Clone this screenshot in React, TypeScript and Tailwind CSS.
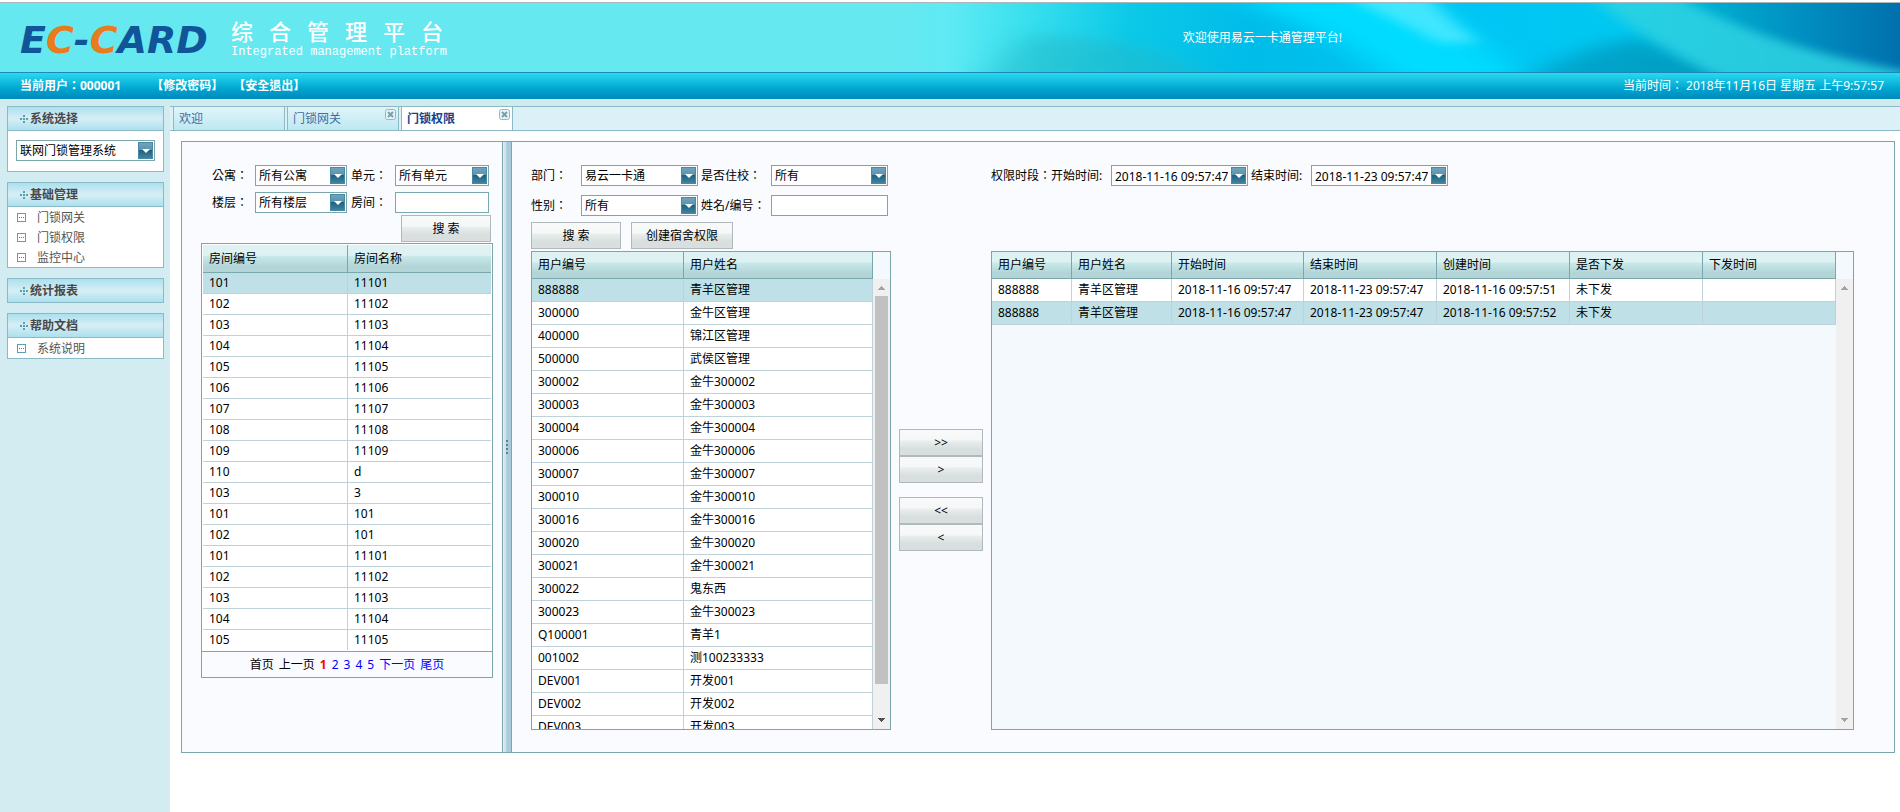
import { useState } from "react";
import type { ReactNode } from "react";
import clsx from "clsx";

const rooms = [
  ["101", "11101"],
  ["102", "11102"],
  ["103", "11103"],
  ["104", "11104"],
  ["105", "11105"],
  ["106", "11106"],
  ["107", "11107"],
  ["108", "11108"],
  ["109", "11109"],
  ["110", "d"],
  ["103", "3"],
  ["101", "101"],
  ["102", "101"],
  ["101", "11101"],
  ["102", "11102"],
  ["103", "11103"],
  ["104", "11104"],
  ["105", "11105"],
];

const users = [
  ["888888", "青羊区管理"],
  ["300000", "金牛区管理"],
  ["400000", "锦江区管理"],
  ["500000", "武侯区管理"],
  ["300002", "金牛300002"],
  ["300003", "金牛300003"],
  ["300004", "金牛300004"],
  ["300006", "金牛300006"],
  ["300007", "金牛300007"],
  ["300010", "金牛300010"],
  ["300016", "金牛300016"],
  ["300020", "金牛300020"],
  ["300021", "金牛300021"],
  ["300022", "鬼东西"],
  ["300023", "金牛300023"],
  ["Q100001", "青羊1"],
  ["001002", "测100233333"],
  ["DEV001", "开发001"],
  ["DEV002", "开发002"],
  ["DEV003", "开发003"],
];

const grants = [
  ["888888", "青羊区管理", "2018-11-16 09:57:47", "2018-11-23 09:57:47", "2018-11-16 09:57:51", "未下发", ""],
  ["888888", "青羊区管理", "2018-11-16 09:57:47", "2018-11-23 09:57:47", "2018-11-16 09:57:52", "未下发", ""],
];

const grantColumns = [
  { title: "用户编号", width: "w-[80px]" },
  { title: "用户姓名", width: "w-[100px]" },
  { title: "开始时间", width: "w-[132px]" },
  { title: "结束时间", width: "w-[133px]" },
  { title: "创建时间", width: "w-[133px]" },
  { title: "是否下发", width: "w-[133px]" },
  { title: "下发时间", width: "w-[133px]" },
];

// the TC face keeps the full-width colon in the middle of its box
const labelFont = "shrink-0 pt-px font-['Noto_Sans','Noto_Sans_CJK_TC',sans-serif]";
const headCell =
  "border-b border-[#7aa7ab] bg-linear-[to_bottom,#def2f3_0%,#def2f3_38%,#c9e9ea_42%,#b3d5d8_80%,#b3d5d8_100%] pl-[6px] text-left font-normal";
const bodyCell = "border-[#bfd2d9] pl-[6px]";

function DropArrow() {
  return (
    <span className="pointer-events-none absolute top-[2px] right-[2px] flex h-[17px] w-[15px] items-center justify-center border border-[#4a87a2] bg-linear-[to_bottom,#6fa3bb_0%,#5b93ae_45%,#1f6280_50%,#3f83a0_100%]">
      <svg width="8" height="4" viewBox="0 0 8 4" fill="#fff">
        <path d="M0 0h8L4 4z" />
      </svg>
    </span>
  );
}

function Combo({ id, value, width, label }: { id: string; value: string; width: string; label?: string }) {
  return (
    <span className={clsx("relative block h-[21px] shrink-0", width)}>
      <select
        id={id}
        aria-label={label}
        className="block h-full w-full appearance-none border border-[#7aa7ab] bg-white pt-px pr-[18px] pl-[3px] text-black outline-none"
      >
        <option>{value}</option>
      </select>
      <DropArrow />
    </span>
  );
}

function DateBox({ id, value }: { id: string; value: string }) {
  return (
    <span className="relative block h-[21px] w-[137px] shrink-0">
      <input
        id={id}
        defaultValue={value}
        className="block h-full w-full border border-[#7aa7ab] bg-white pt-px pr-[18px] pl-[3px] text-black outline-none"
      />
      <DropArrow />
    </span>
  );
}

function TextBox({ id, width }: { id: string; width: string }) {
  return (
    <input
      id={id}
      type="text"
      className={clsx("block h-[21px] shrink-0 border border-[#7aa7ab] bg-white px-1 outline-none", width)}
    />
  );
}

function GrayButton({ children, width, onClick }: { children: ReactNode; width: string; onClick?: () => void }) {
  return (
    <button
      type="button"
      onClick={onClick}
      className={clsx(
        "block h-[27px] shrink-0 border border-[#b0b9bb] bg-linear-[to_bottom,#f8f9f9_0%,#f6f8f8_40%,#e8efee_44%,#d9dedf_75%,#d9dedf_100%] pt-px text-center text-black",
        width
      )}
    >
      {children}
    </button>
  );
}

function ScrollTrack({ active }: { active?: boolean }) {
  return (
    <div className="flex w-[17px] shrink-0 flex-col items-center bg-[#f0f0f0]">
      <svg className="h-[17px] w-[17px] shrink-0" viewBox="0 0 17 17" fill="#a3a3a3">
        <path d="M8 7h1v1h1v1h1v1h1v1H5v-1h1V9h1V8h1z" />
      </svg>
      {active && <div className="h-[388px] w-[13px] bg-[#c1c1c1]" />}
      <svg className="mt-auto h-[17px] w-[17px] shrink-0" viewBox="0 0 17 17" fill={active ? "#505050" : "#a3a3a3"}>
        <path d="M5 6h7v1h-1v1h-1v1H9v1H8V9H7V8H6V7H5z" />
      </svg>
    </div>
  );
}

function Banner() {
  return (
    <svg
      className="absolute top-0 right-0 h-full w-[1000px]"
      viewBox="0 0 1000 69"
      preserveAspectRatio="none"
      aria-hidden="true"
    >
      <defs>
        <linearGradient id="sea" x1="0" x2="1" y1="0" y2="0">
          <stop offset="0" stopColor="#66e8f1" />
          <stop offset="0.05" stopColor="#5eeaf4" />
          <stop offset="0.13" stopColor="#38dfee" />
          <stop offset="0.23" stopColor="#0cc9e8" />
          <stop offset="0.35" stopColor="#00bce9" />
          <stop offset="0.6" stopColor="#00c6f5" />
          <stop offset="0.72" stopColor="#00c8f0" />
          <stop offset="0.82" stopColor="#00a9d0" />
          <stop offset="0.92" stopColor="#0089bd" />
          <stop offset="1" stopColor="#0070ad" />
        </linearGradient>
        <filter id="soft" x="-40%" y="-80%" width="180%" height="260%">
          <feGaussianBlur stdDeviation="20 7" />
        </filter>
        <filter id="edge" x="-20%" y="-50%" width="140%" height="200%">
          <feGaussianBlur stdDeviation="9 4" />
        </filter>
      </defs>
      <rect width="1000" height="69" fill="url(#sea)" />
      <path d="M80 80 L130 30 L230 40 L330 80z" fill="#22b8c8" opacity="0.55" filter="url(#soft)" />
      <path d="M320 -8 C400 14 450 44 500 80 L630 80 C580 40 540 10 520 -8z" fill="#00dcff" filter="url(#soft)" />
      <path d="M440 -8 C480 10 510 24 540 40 L580 40 C560 24 540 10 530 -8z" fill="#5cecff" opacity="0.7" filter="url(#edge)" />
      <path d="M620 80 C660 56 700 40 740 34 L850 80z" fill="#0090b4" opacity="0.65" filter="url(#soft)" />
      <path d="M690 -8 C730 26 780 56 830 80 L1010 80 L1010 69 C910 52 830 24 775 -8z" fill="#2fd3e2" opacity="0.85" filter="url(#edge)" />
    </svg>
  );
}

function SideHead({ children }: { children: ReactNode }) {
  return (
    <h2 className="flex h-[25px] items-center gap-[2px] border border-[#8bb9c6] bg-linear-[to_bottom,#abe0ee_0%,#d3edf4_45%,#d3edf4_55%,#abe0ee_100%] pl-3 font-bold text-[#484848]">
      <svg width="8" height="8" viewBox="0 0 8 8" fill="#5aa0b4">
        <path d="M3 0h2v2H3zM0 3h2v2H0zM3 3h2v2H3zM6 3h2v2H6zM3 6h2v2H3z" />
      </svg>
      {children}
    </h2>
  );
}

function SideLink({ children }: { children: ReactNode }) {
  return (
    <a href="#" className="flex h-5 items-center gap-[11px] pl-[9px] text-[#555]">
      <svg width="9" height="9" viewBox="0 0 9 9">
        <rect x="0.5" y="0.5" width="8" height="8" fill="#fff" stroke="#5aa0b4" />
        <path d="M2 4h1v1H2zM4 4h1v1H4zM6 4h1v1H6z" fill="#3f8196" />
      </svg>
      <span className="pt-[2px]">{children}</span>
    </a>
  );
}

function TabClose() {
  return (
    <svg className="absolute top-[2px] right-[2px]" width="11" height="11" viewBox="0 0 11 11">
      <rect x="0.5" y="0.5" width="10" height="10" rx="2" fill="#e8f4f8" stroke="#8db8c4" />
      <path d="M3 3l5 5M8 3l-5 5" stroke="#6fa3b2" strokeWidth="2" />
    </svg>
  );
}

export default function App() {
  const [tab, setTab] = useState("门锁权限");
  const [roomRow, setRoomRow] = useState(0);
  const [userRow, setUserRow] = useState(0);
  const [grantRow, setGrantRow] = useState(1);

  return (
    <div className="flex min-h-screen flex-col bg-white font-['Noto_Sans','Noto_Sans_CJK_SC',sans-serif] text-[12px] leading-4 text-black">
      {/* Top banner */}
      <header className="mt-[2px]">
        <div className="relative flex h-[71px] items-center border-t border-b border-t-[#a9b8b8] border-b-[#1c8ab8] bg-[#66e8f1] pl-5">
          <Banner />
          <div className="relative w-[211px] pt-1 font-['DejaVu_Sans',sans-serif] text-[38px] leading-10 font-bold whitespace-nowrap text-[#0f5598] italic">
            E<span className="text-[#e87b1c]">C</span>-<span className="text-[#e87b1c]">C</span>ARD
          </div>
          <div className="relative pt-1 text-white">
            <h1 className="flex gap-4 font-['Noto_Sans_CJK_SC',sans-serif] text-[22px] leading-6 font-medium">
              {"综合管理平台".split("").map((ch) => (
                <span key={ch}>{ch}</span>
              ))}
            </h1>
            <p className="font-['Liberation_Mono',monospace] text-[12px] leading-5">Integrated management platform</p>
          </div>
          <p className="absolute top-[27px] right-[558px] text-white">欢迎使用易云一卡通管理平台!</p>
        </div>
        <div className="flex h-[26px] items-center bg-linear-[to_bottom,#2adaf0_0%,#00a5d0_60%,#008abb_100%] pr-4 pl-5 font-['Noto_Sans','Noto_Sans_CJK_TC',sans-serif] font-bold text-white">
          <span>当前用户：000001</span>
          <a href="#" className="ml-[30px]">
            【修改密码】
          </a>
          <a href="#" className="ml-[10px]">
            【安全退出】
          </a>
          <span className="ml-auto font-normal">当前时间： 2018年11月16日 星期五 上午9:57:57</span>
        </div>
        <div className="h-[7px] bg-[#cfebee]" />
      </header>

      <div className="flex flex-1">
        {/* Side menu */}
        <aside className="flex w-[170px] shrink-0 flex-col gap-[10px] bg-[#d3ecf1] pr-[6px] pl-[7px]">
          <section>
            <SideHead>系统选择</SideHead>
            <div className="border border-t-0 border-[#8bb9c6] bg-white px-2 pt-[9px] pb-[10px]">
              <Combo id="system" label="系统选择" value="联网门锁管理系统" width="w-full" />
            </div>
          </section>
          <section>
            <SideHead>基础管理</SideHead>
            <nav className="border border-t-0 border-[#8bb9c6] bg-white">
              <SideLink>门锁网关</SideLink>
              <SideLink>门锁权限</SideLink>
              <SideLink>监控中心</SideLink>
            </nav>
          </section>
          <section>
            <SideHead>统计报表</SideHead>
          </section>
          <section>
            <SideHead>帮助文档</SideHead>
            <nav className="border border-t-0 border-[#8bb9c6] bg-white">
              <SideLink>系统说明</SideLink>
            </nav>
          </section>
        </aside>

        <main className="min-w-0 flex-1">
          <div className="flex h-[25px] gap-[2px] border-t border-b border-[#8bb9c6] bg-[#dcf0f8] pl-[3px]">
            {["欢迎", "门锁网关", "门锁权限"].map((name, i) => (
              <button
                key={name}
                type="button"
                onClick={() => setTab(name)}
                className={clsx(
                  "relative w-[112px] border-r border-l border-[#8bb9c6] pt-px pl-[5px] text-left",
                  tab === name
                    ? "bg-white font-bold text-[#15428b]"
                    : "bg-linear-[to_bottom,#e1f4fa_0%,#bee8f2_100%] text-[#416da3]"
                )}
              >
                {name}
                {i > 0 && <TabClose />}
              </button>
            ))}
          </div>

          <div className="mt-[10px] mr-[5px] ml-[11px] flex border border-[#7aa7ab] bg-[#f9fbff]">
            {/* Rooms */}
            <section className="w-[320px] shrink-0 pt-[23px] pr-[9px] pl-[19px]">
              <div className="flex items-center pl-[11px]">
                <label htmlFor="flat" className={clsx(labelFont, "w-[43px]")}>公寓：</label>
                <Combo id="flat" value="所有公寓" width="w-[92px]" />
                <label htmlFor="unit" className={clsx(labelFont, "w-12 pl-1")}>单元：</label>
                <Combo id="unit" value="所有单元" width="w-[94px]" />
              </div>
              <div className="mt-[6px] flex items-center pl-[11px]">
                <label htmlFor="floor" className={clsx(labelFont, "w-[43px]")}>楼层：</label>
                <Combo id="floor" value="所有楼层" width="w-[92px]" />
                <label htmlFor="room" className={clsx(labelFont, "w-12 pl-1")}>房间：</label>
                <TextBox id="room" width="w-[94px]" />
              </div>
              <div className="mt-[2px] flex justify-end pr-[2px]">
                <GrayButton width="w-[90px]">搜 索</GrayButton>
              </div>
              <div className="mt-px border border-[#7aa7ab] bg-white p-px">
                <table className="w-full table-fixed border-separate border-spacing-0">
                  <thead>
                    <tr className="h-7">
                      <th className={clsx(headCell, "w-[145px] border-r")}>房间编号</th>
                      <th className={headCell}>房间名称</th>
                    </tr>
                  </thead>
                  <tbody>
                    {rooms.map((r, i) => (
                      <tr
                        key={i}
                        onClick={() => setRoomRow(i)}
                        className={clsx("h-[21px] last:h-5", i === roomRow && "bg-[#bfe0e6]")}
                      >
                        <td className={clsx(bodyCell, "border-r", i < rooms.length - 1 && "border-b")}>{r[0]}</td>
                        <td className={clsx(bodyCell, i < rooms.length - 1 && "border-b")}>{r[1]}</td>
                      </tr>
                    ))}
                  </tbody>
                </table>
              </div>
              <div className="flex h-[26px] items-center justify-center gap-[5px] border border-t-0 border-[#7aa7ab]">
                <span>首页</span>
                <span>上一页</span>
                <span className="font-bold text-[#f00]">1</span>
                {["2", "3", "4", "5", "下一页", "尾页"].map((p) => (
                  <a key={p} href="#" className="text-[#00f]">
                    {p}
                  </a>
                ))}
              </div>
            </section>

            {/* Splitter */}
            <div className="flex w-[10px] shrink-0 items-center justify-end border-r border-l border-[#7aa7ab] bg-linear-[to_right,#e3f1f8_0%,#c8dfeb_35%,#a9cbdc_50%,#a9cbdc_100%] pr-[2px]">
              <svg width="3" height="15" viewBox="0 0 3 15" fill="#5b7f94">
                <path d="M0 0h2v2H0zM0 4h2v2H0zM0 8h2v2H0zM0 12h2v2H0z" />
              </svg>
            </div>

            {/* Users */}
            <section className="w-[379px] shrink-0 pt-[23px] pb-[22px] pl-[19px]">
              <div className="flex items-center">
                <label htmlFor="dept" className={clsx(labelFont, "w-[50px]")}>部门：</label>
                <Combo id="dept" value="易云一卡通" width="w-[117px]" />
                <label htmlFor="living" className={clsx(labelFont, "w-[73px] pl-[3px]")}>是否住校：</label>
                <Combo id="living" value="所有" width="w-[117px]" />
              </div>
              <div className="mt-[9px] flex items-center">
                <label htmlFor="sex" className={clsx(labelFont, "w-[50px]")}>性别：</label>
                <Combo id="sex" value="所有" width="w-[117px]" />
                <label htmlFor="name" className={clsx(labelFont, "w-[73px] pl-[3px]")}>姓名/编号：</label>
                <TextBox id="name" width="w-[117px]" />
              </div>
              <div className="mt-[6px] flex gap-[10px]">
                <GrayButton width="w-[90px]">搜 索</GrayButton>
                <GrayButton width="w-[102px]">创建宿舍权限</GrayButton>
              </div>
              <div className="mt-[2px] flex h-[479px] overflow-hidden border border-[#7aa7ab] bg-[#f3f9fc]">
                <div className="flex-1">
                  <table className="w-full table-fixed border-separate border-spacing-0">
                    <thead>
                      <tr className="h-[27px]">
                        <th className={clsx(headCell, "w-[152px] border-r")}>用户编号</th>
                        <th className={clsx(headCell, "border-r")}>用户姓名</th>
                      </tr>
                    </thead>
                    <tbody>
                      {users.map((u, i) => (
                        <tr
                          key={u[0]}
                          onClick={() => setUserRow(i)}
                          className={clsx("h-[23px]", i === userRow ? "bg-[#bfe0e6]" : "bg-white")}
                        >
                          <td className={clsx(bodyCell, "border-r border-b")}>{u[0]}</td>
                          <td className={clsx(bodyCell, "border-r border-b")}>{u[1]}</td>
                        </tr>
                      ))}
                    </tbody>
                  </table>
                </div>
                <div className="flex pt-[27px]">
                  <ScrollTrack active />
                </div>
              </div>
            </section>

            {/* Move buttons */}
            <div className="flex w-[100px] shrink-0 flex-col items-center pt-[287px]">
              <GrayButton width="w-[84px]">&gt;&gt;</GrayButton>
              <GrayButton width="w-[84px]">&gt;</GrayButton>
              <div className="mt-[14px]">
                <GrayButton width="w-[84px]">&lt;&lt;</GrayButton>
                <GrayButton width="w-[84px]">&lt;</GrayButton>
              </div>
            </div>

            {/* Granted permissions */}
            <section className="flex min-w-0 flex-1 flex-col pt-[23px] pr-10 pb-[22px]">
              <div className="flex items-center">
                <span className={clsx(labelFont, "w-[60px]")}>权限时段：</span>
                <label htmlFor="begin" className={clsx(labelFont, "w-[60px]")}>开始时间:</label>
                <DateBox id="begin" value="2018-11-16 09:57:47" />
                <label htmlFor="end" className={clsx(labelFont, "w-[63px] pl-[3px]")}>结束时间:</label>
                <DateBox id="end" value="2018-11-23 09:57:47" />
              </div>
              <div className="mt-[65px] flex flex-1 overflow-hidden border border-[#7aa7ab] bg-[#f3f9fc]">
                <div className="min-w-0 flex-1">
                  <table className="w-full table-fixed border-separate border-spacing-0">
                    <thead>
                      <tr className="h-[27px]">
                        {grantColumns.map((c) => (
                          <th key={c.title} className={clsx(headCell, "border-r", c.width)}>
                            {c.title}
                          </th>
                        ))}
                      </tr>
                    </thead>
                    <tbody>
                      {grants.map((g, i) => (
                        <tr
                          key={i}
                          onClick={() => setGrantRow(i)}
                          className={clsx("h-[23px]", i === grantRow ? "bg-[#bfe0e6]" : "bg-white")}
                        >
                          {g.map((v, j) => (
                            <td key={j} className={clsx(bodyCell, "border-r border-b whitespace-nowrap")}>
                              {v}
                            </td>
                          ))}
                        </tr>
                      ))}
                    </tbody>
                  </table>
                </div>
                <div className="flex pt-[27px]">
                  <ScrollTrack />
                </div>
              </div>
            </section>
          </div>
        </main>
      </div>
    </div>
  );
}
